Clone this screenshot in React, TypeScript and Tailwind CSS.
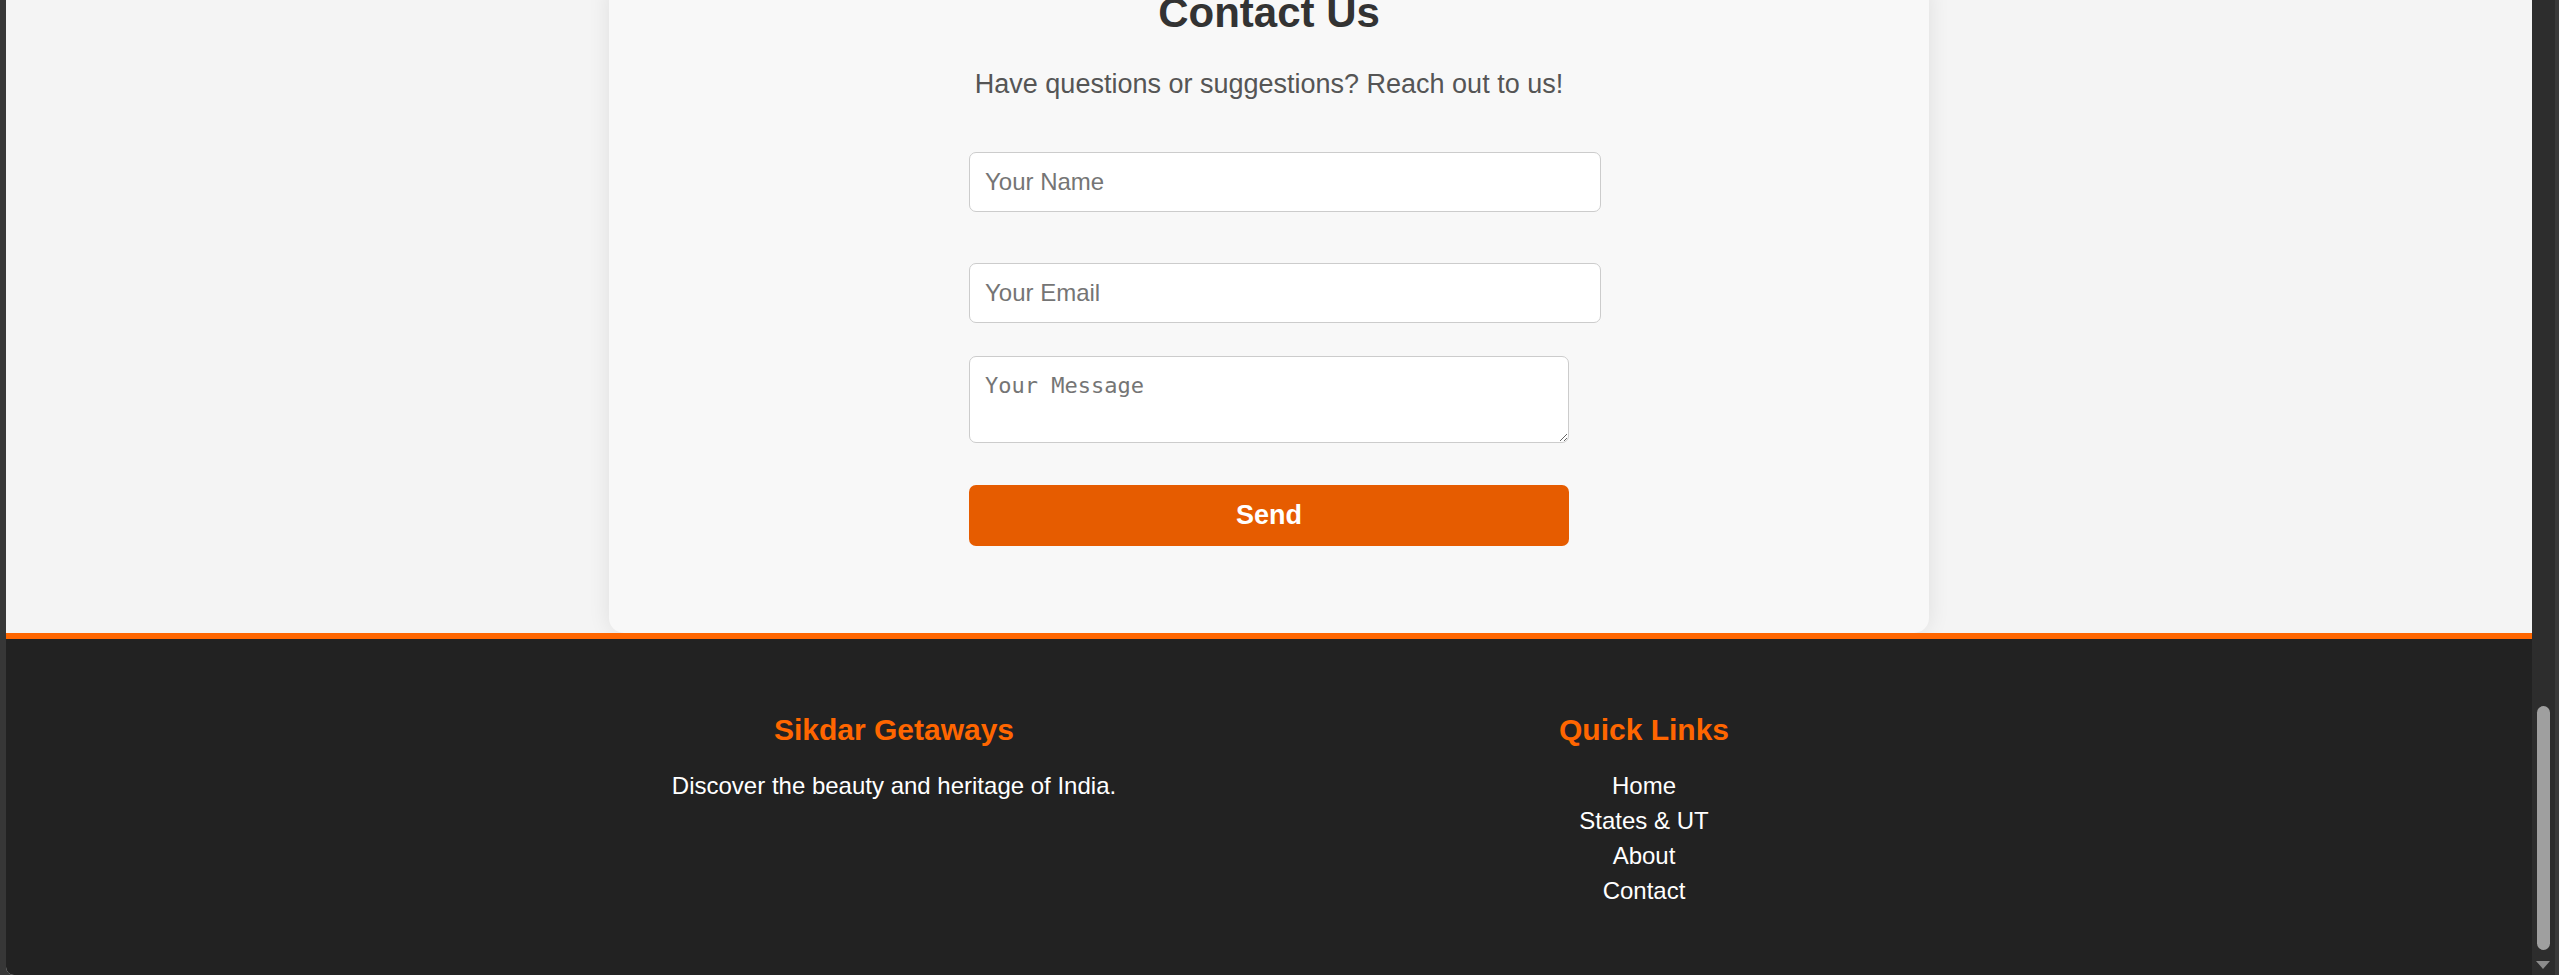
import React from "react";

export default function App() {
  const sans = { fontFamily: '"Liberation Sans", Arial, sans-serif' };
  return (
    <div className="flex h-[975px] w-[2559px] overflow-hidden bg-[#373737]" style={sans}>
      <div className="w-[6px] shrink-0 bg-[#373737]" />
      <div className="flex min-w-0 flex-1 flex-col overflow-hidden rounded-bl-[8px] bg-[#f4f4f4]">
        <section className="flex justify-center">
          <div className="-mt-[11px] flex w-[1320px] flex-col items-center rounded-b-[15px] bg-[#f8f8f8] pb-[87px] shadow-[0_0_22px_rgba(0,0,0,0.09)]">
            <h2 className="m-0 text-[42px] font-bold leading-[47px] text-[#333]">Contact Us</h2>
            <p className="mt-[33px] text-[27px] leading-[31px] text-[#555]">
              Have questions or suggestions? Reach out to us!
            </p>
            <form className="flex w-[600px] flex-col items-start" onSubmit={(e) => e.preventDefault()}>
              <input
                type="text"
                placeholder="Your Name"
                className="mt-[52px] block h-[60px] w-[632px] rounded-[7px] border border-[#ccc] bg-white px-[15px] text-[24px] text-[#333] outline-none placeholder:text-[#757575]"
              />
              <input
                type="email"
                placeholder="Your Email"
                className="mt-[51px] block h-[60px] w-[632px] rounded-[7px] border border-[#ccc] bg-white px-[15px] text-[24px] text-[#333] outline-none placeholder:text-[#757575]"
              />
              <textarea
                placeholder="Your Message"
                className="mt-[33px] block h-[87px] w-[600px] rounded-[7px] border border-[#ccc] bg-white px-[15px] pt-[16px] text-[22px] leading-[25px] text-[#333] outline-none placeholder:text-[#757575]"
                style={{ fontFamily: '"DejaVu Sans Mono", monospace' }}
              />
              <button
                type="submit"
                className="mt-[42px] flex h-[61px] w-[600px] items-center justify-center rounded-[7px] bg-[#e65c00] text-[27px] font-bold text-white"
              >
                Send
              </button>
            </form>
          </div>
        </section>
        <footer className="flex-1 border-t-[6px] border-[#ff6600] bg-[#222222]">
          <div className="mx-auto grid w-[1500px] grid-cols-2 pt-[74px] text-center">
            <div className="flex flex-col items-center">
              <h3 className="text-[30px] font-bold leading-[34.5px] text-[#ff6600]">Sikdar Getaways</h3>
              <p className="mt-[24.5px] text-[24px] leading-[27.6px] text-white">
                Discover the beauty and heritage of India.
              </p>
            </div>
            <div className="flex flex-col items-center">
              <h3 className="text-[30px] font-bold leading-[34.5px] text-[#ff6600]">Quick Links</h3>
              <ul className="mt-[24.5px] flex flex-col items-center gap-[7.5px] text-[24px] leading-[27.5px] text-white">
                <li>Home</li>
                <li>States &amp; UT</li>
                <li>About</li>
                <li>Contact</li>
              </ul>
            </div>
          </div>
        </footer>
      </div>
      <div className="flex w-[27px] shrink-0 flex-col items-start border-r-[4px] border-[#3a3a3a] bg-[#2d2d2d] pl-[5px] pt-[706px]">
        <div className="h-[244px] w-[13px] rounded-full bg-[#9f9f9f]" />
        <svg width="14" height="9" viewBox="0 0 14 9" className="ml-[-1px] mt-[11px]">
          <path d="M0 0 L14 0 L7 8 Z" fill="#8c8c8c" />
        </svg>
      </div>
    </div>
  );
}
